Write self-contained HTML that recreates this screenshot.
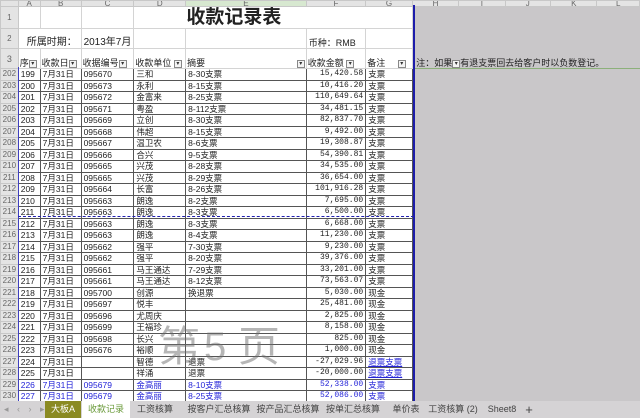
<!DOCTYPE html>
<html><head><meta charset="utf-8">
<style>
*{margin:0;padding:0;box-sizing:border-box}
body{width:640px;height:418px;overflow:hidden;background:#c9c7c9;font-family:"Liberation Sans","Noto Sans CJK SC","WenQuanYi Zen Hei",sans-serif;font-size:8.5px;color:#222;position:relative}
table{position:absolute;left:0;top:0;border-collapse:collapse;table-layout:fixed}
td{padding:0 2px;white-space:nowrap;overflow:hidden;line-height:10px;border:1px solid #d4d4d4;background:#fff}
td.rn{background:#e4e4e4;color:#666;text-align:center;padding:0;border-color:#c8c8c8;font-size:8px}
td.g{background:#c9c7c9;border:1px solid #c9c7c9}
tr.d td.c{border:1px solid #555}
td.r{text-align:right;font-family:"Liberation Mono",monospace;font-size:8px}
tr.hd td{background:#e4e4e4;color:#666;text-align:center;font-size:8px;line-height:5px;border-color:#c8c8c8}
tr.hd td.g{background:#e4e4e4}
.dd{display:inline-block;width:8px;height:8px;border:1px solid #888;background:#f4f4f4;font-size:6px;line-height:6px;text-align:center;vertical-align:middle;color:#333}
.bl td.c{color:#2424d8}
.u{color:#2424d8;text-decoration:underline}
.h3 td{font-size:9px;padding:0 1px}
.tabs{position:absolute;left:0;top:401px;width:640px;height:17px;background:#d5d3d5;font-size:9px;color:#444}
.tabs span{position:absolute;top:0;height:17px;line-height:17px;text-align:center;white-space:nowrap}
.wm{position:absolute;font-size:42px;color:rgba(110,110,110,0.5);line-height:50px;top:322px}
</style></head><body>
<table>
<colgroup><col style="width:18px"><col style="width:22px"><col style="width:41px"><col style="width:47px"><col style="width:52px"><col style="width:127px"><col style="width:60px"><col style="width:47px"><col style="width:47px"><col style="width:47px"><col style="width:46px"><col style="width:47px"><col style="width:43px"></colgroup>
<tr class="hd" style="height:5px"><td></td><td>A</td><td>B</td><td>C</td><td>D</td><td style="background:#d7e8d0">E</td><td>F</td><td>G</td><td class="g">H</td><td class="g">I</td><td class="g">J</td><td class="g">K</td><td class="g">L</td></tr>
<tr style="height:22px"><td class="rn">1</td><td></td><td></td><td></td><td colspan="4" style="font-size:19px;font-weight:bold;padding-left:52px;border-left:1px solid #7a9a6a">收款记录表</td><td class="g"></td><td class="g"></td><td class="g"></td><td class="g"></td><td class="g"></td></tr>
<tr style="height:20px;vertical-align:bottom"><td class="rn" style="vertical-align:middle">2</td><td colspan="2" style="font-size:10px;padding-left:8px">所属时期：</td><td style="font-size:10px">2013年7月</td><td style="border-left:1px solid #7a9a6a"></td><td></td><td style="font-size:9px">币种：RMB</td><td></td><td class="g"></td><td class="g"></td><td class="g"></td><td class="g"></td><td class="g"></td></tr>
<tr class="h3" style="height:20px;vertical-align:bottom"><td class="rn" style="vertical-align:middle;padding:0">3</td><td>序<span class="dd">▾</span></td><td>收款日<span class="dd">▾</span></td><td>收据编号<span class="dd">▾</span></td><td>收款单位 <span class="dd">▾</span></td><td>摘要<span class="dd" style="float:right;margin-top:2px">▾</span></td><td>收款金额 <span class="dd">▾</span></td><td>备注 &nbsp;&nbsp;&nbsp;&nbsp;<span class="dd">▾</span></td><td class="g" colspan="5" style="overflow:visible;border-bottom:1px solid #8cb07a">&nbsp;注：如果<span class="dd">▾</span>有退支票回去给客户时以负数登记。</td></tr>
<tr class="d" style="height:11.5px"><td class="rn">202</td><td class="c">199</td><td class="c">7月31日</td><td class="c">095670</td><td class="c">三和</td><td class="c">8-30支票</td><td class="c r">15,420.58</td><td class="c">支票</td><td class="g" colspan="5"></td></tr>
<tr class="d" style="height:11.5px"><td class="rn">203</td><td class="c">200</td><td class="c">7月31日</td><td class="c">095673</td><td class="c">永利</td><td class="c">8-15支票</td><td class="c r">10,416.20</td><td class="c">支票</td><td class="g" colspan="5"></td></tr>
<tr class="d" style="height:11.5px"><td class="rn">204</td><td class="c">201</td><td class="c">7月31日</td><td class="c">095672</td><td class="c">金富来</td><td class="c">8-25支票</td><td class="c r">110,649.64</td><td class="c">支票</td><td class="g" colspan="5"></td></tr>
<tr class="d" style="height:11.5px"><td class="rn">205</td><td class="c">202</td><td class="c">7月31日</td><td class="c">095671</td><td class="c">粤盈</td><td class="c">8-112支票</td><td class="c r">34,481.15</td><td class="c">支票</td><td class="g" colspan="5"></td></tr>
<tr class="d" style="height:11.5px"><td class="rn">206</td><td class="c">203</td><td class="c">7月31日</td><td class="c">095669</td><td class="c">立创</td><td class="c">8-30支票</td><td class="c r">82,837.70</td><td class="c">支票</td><td class="g" colspan="5"></td></tr>
<tr class="d" style="height:11.5px"><td class="rn">207</td><td class="c">204</td><td class="c">7月31日</td><td class="c">095668</td><td class="c">伟超</td><td class="c">8-15支票</td><td class="c r">9,492.00</td><td class="c">支票</td><td class="g" colspan="5"></td></tr>
<tr class="d" style="height:11.5px"><td class="rn">208</td><td class="c">205</td><td class="c">7月31日</td><td class="c">095667</td><td class="c">温卫农</td><td class="c">8-6支票</td><td class="c r">19,308.87</td><td class="c">支票</td><td class="g" colspan="5"></td></tr>
<tr class="d" style="height:11.5px"><td class="rn">209</td><td class="c">206</td><td class="c">7月31日</td><td class="c">095666</td><td class="c">合兴</td><td class="c">9-5支票</td><td class="c r">54,390.81</td><td class="c">支票</td><td class="g" colspan="5"></td></tr>
<tr class="d" style="height:11.5px"><td class="rn">210</td><td class="c">207</td><td class="c">7月31日</td><td class="c">095665</td><td class="c">兴茂</td><td class="c">8-28支票</td><td class="c r">34,535.00</td><td class="c">支票</td><td class="g" colspan="5"></td></tr>
<tr class="d" style="height:11.5px"><td class="rn">211</td><td class="c">208</td><td class="c">7月31日</td><td class="c">095665</td><td class="c">兴茂</td><td class="c">8-29支票</td><td class="c r">36,654.00</td><td class="c">支票</td><td class="g" colspan="5"></td></tr>
<tr class="d" style="height:11.5px"><td class="rn">212</td><td class="c">209</td><td class="c">7月31日</td><td class="c">095664</td><td class="c">长富</td><td class="c">8-26支票</td><td class="c r">101,916.28</td><td class="c">支票</td><td class="g" colspan="5"></td></tr>
<tr class="d" style="height:11.5px"><td class="rn">213</td><td class="c">210</td><td class="c">7月31日</td><td class="c">095663</td><td class="c">朗逸</td><td class="c">8-2支票</td><td class="c r">7,695.00</td><td class="c">支票</td><td class="g" colspan="5"></td></tr>
<tr class="d" style="height:11.5px"><td class="rn">214</td><td class="c">211</td><td class="c">7月31日</td><td class="c">095663</td><td class="c">朗逸</td><td class="c">8-3支票</td><td class="c r">6,500.00</td><td class="c">支票</td><td class="g" colspan="5"></td></tr>
<tr class="d" style="height:11.5px"><td class="rn">215</td><td class="c">212</td><td class="c">7月31日</td><td class="c">095663</td><td class="c">朗逸</td><td class="c">8-3支票</td><td class="c r">6,668.00</td><td class="c">支票</td><td class="g" colspan="5"></td></tr>
<tr class="d" style="height:11.5px"><td class="rn">216</td><td class="c">213</td><td class="c">7月31日</td><td class="c">095663</td><td class="c">朗逸</td><td class="c">8-4支票</td><td class="c r">11,230.00</td><td class="c">支票</td><td class="g" colspan="5"></td></tr>
<tr class="d" style="height:11.5px"><td class="rn">217</td><td class="c">214</td><td class="c">7月31日</td><td class="c">095662</td><td class="c">强平</td><td class="c">7-30支票</td><td class="c r">9,230.00</td><td class="c">支票</td><td class="g" colspan="5"></td></tr>
<tr class="d" style="height:11.5px"><td class="rn">218</td><td class="c">215</td><td class="c">7月31日</td><td class="c">095662</td><td class="c">强平</td><td class="c">8-20支票</td><td class="c r">39,376.00</td><td class="c">支票</td><td class="g" colspan="5"></td></tr>
<tr class="d" style="height:11.5px"><td class="rn">219</td><td class="c">216</td><td class="c">7月31日</td><td class="c">095661</td><td class="c">马王通达</td><td class="c">7-29支票</td><td class="c r">33,201.00</td><td class="c">支票</td><td class="g" colspan="5"></td></tr>
<tr class="d" style="height:11.5px"><td class="rn">220</td><td class="c">217</td><td class="c">7月31日</td><td class="c">095661</td><td class="c">马王通达</td><td class="c">8-12支票</td><td class="c r">73,563.07</td><td class="c">支票</td><td class="g" colspan="5"></td></tr>
<tr class="d" style="height:11.5px"><td class="rn">221</td><td class="c">218</td><td class="c">7月31日</td><td class="c">095700</td><td class="c">创源</td><td class="c">换退票</td><td class="c r">5,030.00</td><td class="c">现金</td><td class="g" colspan="5"></td></tr>
<tr class="d" style="height:11.5px"><td class="rn">222</td><td class="c">219</td><td class="c">7月31日</td><td class="c">095697</td><td class="c">悦丰</td><td class="c"></td><td class="c r">25,481.00</td><td class="c">现金</td><td class="g" colspan="5"></td></tr>
<tr class="d" style="height:11.5px"><td class="rn">223</td><td class="c">220</td><td class="c">7月31日</td><td class="c">095696</td><td class="c">尤周庆</td><td class="c"></td><td class="c r">2,825.00</td><td class="c">现金</td><td class="g" colspan="5"></td></tr>
<tr class="d" style="height:11.5px"><td class="rn">224</td><td class="c">221</td><td class="c">7月31日</td><td class="c">095699</td><td class="c">王福珍</td><td class="c"></td><td class="c r">8,158.00</td><td class="c">现金</td><td class="g" colspan="5"></td></tr>
<tr class="d" style="height:11.5px"><td class="rn">225</td><td class="c">222</td><td class="c">7月31日</td><td class="c">095698</td><td class="c">长兴</td><td class="c"></td><td class="c r">825.00</td><td class="c">现金</td><td class="g" colspan="5"></td></tr>
<tr class="d" style="height:11.5px"><td class="rn">226</td><td class="c">223</td><td class="c">7月31日</td><td class="c">095676</td><td class="c">裕顺</td><td class="c"></td><td class="c r">1,000.00</td><td class="c">现金</td><td class="g" colspan="5"></td></tr>
<tr class="d" style="height:11.5px"><td class="rn">227</td><td class="c">224</td><td class="c">7月31日</td><td class="c"></td><td class="c">智德</td><td class="c">退票</td><td class="c r">-27,029.96</td><td class="c"><span class="u">退票支票</span></td><td class="g" colspan="5"></td></tr>
<tr class="d" style="height:11.5px"><td class="rn">228</td><td class="c">225</td><td class="c">7月31日</td><td class="c"></td><td class="c">祥涌</td><td class="c">退票</td><td class="c r">-20,000.00</td><td class="c"><span class="u">退票支票</span></td><td class="g" colspan="5"></td></tr>
<tr class="d bl" style="height:11.5px"><td class="rn">229</td><td class="c">226</td><td class="c">7月31日</td><td class="c">095679</td><td class="c">金高丽</td><td class="c">8-10支票</td><td class="c r">52,338.00</td><td class="c">支票</td><td class="g" colspan="5"></td></tr>
<tr class="d bl" style="height:11.5px"><td class="rn">230</td><td class="c">227</td><td class="c">7月31日</td><td class="c">095679</td><td class="c">金高丽</td><td class="c">8-25支票</td><td class="c r">52,086.00</td><td class="c">支票</td><td class="g" colspan="5"></td></tr>
</table>
<div style="position:absolute;left:413px;top:5px;width:2px;height:396px;background:#1c1caa"></div>
<div style="position:absolute;left:18px;top:67px;width:1px;height:334px;background:#4040c0"></div>
<div style="position:absolute;left:18px;top:216px;width:396px;border-top:1px dashed #2020b0"></div>
<div class="wm" style="left:158px">第</div>
<div class="wm" style="left:204px;font-size:40px">5</div>
<div class="wm" style="left:238px">页</div>
<div class="tabs">
<span style="left:4px;width:40px;color:#999;letter-spacing:3px">◂ ‹ › ▸</span>
<span style="left:45px;width:36px;background:#8a8a22;color:#fff">大板A</span>
<span style="left:82px;width:48px;background:#fff;color:#6a9a3a">收款记录</span>
<span style="left:132px;width:46px">工资核算</span>
<span style="left:183px;width:72px">按客户汇总核算</span>
<span style="left:252px;width:72px">按产品汇总核算</span>
<span style="left:322px;width:62px">按单汇总核算</span>
<span style="left:390px;width:32px">单价表</span>
<span style="left:426px;width:54px">工资核算 (2)</span>
<span style="left:484px;width:36px">Sheet8</span>
<span style="left:522px;width:14px;font-size:13px">+</span>
</div>
</body></html>
